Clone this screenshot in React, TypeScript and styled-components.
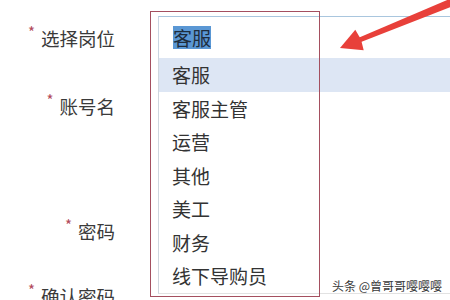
import React from 'react';
import styled, { createGlobalStyle } from 'styled-components';

const GlobalStyle = createGlobalStyle`
  html, body {
    margin: 0;
    padding: 0;
    background: #ffffff;
  }
  body {
    font-family: "Noto Sans CJK SC", "Noto Sans", sans-serif;
  }
`;

const Page = styled.div`
  position: relative;
  width: 450px;
  height: 300px;
  overflow: hidden;
  background: #ffffff;
`;

// form rows behind the open dropdown
const Form = styled.div`
  display: flex;
  flex-direction: column;
  padding-top: 16px;
`;

const FormRow = styled.div<{ $height: number; $after: number }>`
  display: flex;
  align-items: center;
  height: ${p => p.$height}px;
  margin-bottom: ${p => p.$after}px;
`;

const Label = styled.div`
  width: 115px;
  flex-shrink: 0;
  text-align: right;
  font-size: 18.5px;
  line-height: 24px;
  color: #3a3a3a;
  white-space: nowrap;
`;

const Star = styled.span`
  display: inline-block;
  margin-right: 6px;
  font-size: 15px;
  line-height: 1;
  color: #b24a5c;
  vertical-align: 8px;
`;

const SelectBox = styled.div`
  margin-left: 43px;
  flex: 1;
  align-self: stretch;
  display: flex;
  align-items: center;
  padding-left: 14px;
  border-top: 1px solid #a9c6de;
  border-left: 1px solid #c9d5e2;
  background: #ffffff;
`;

const Selected = styled.span`
  font-size: 19px;
  line-height: 23px;
  background: #5a97d4;
  color: #1e2d3d;
`;

const Dropdown = styled.ul`
  position: absolute;
  left: 158px;
  top: 58px;
  right: -4px;
  margin: 0;
  padding: 0;
  list-style: none;
  background: #ffffff;
  border-left: 1px solid #cfd6de;
  border-bottom: 1px solid #e2e2e2;
`;

const Option = styled.li<{ $active?: boolean }>`
  height: 33.5px;
  display: flex;
  align-items: center;
  padding-left: 13px;
  font-size: 19px;
  color: #333333;
  background: ${p => (p.$active ? '#dde6f4' : 'transparent')};
`;

const Annotation = styled.div`
  position: absolute;
  left: 150px;
  top: 11px;
  width: 168px;
  height: 284px;
  border: 1.5px solid #a44f5f;
  pointer-events: none;
`;

const Arrow = styled.svg`
  position: absolute;
  left: 0;
  top: 0;
  pointer-events: none;
`;

const Watermark = styled.div`
  position: absolute;
  right: 8px;
  top: 278px;
  font-size: 12px;
  line-height: 16px;
  color: #3a3a3a;
  white-space: nowrap;
`;

const options = ['客服', '客服主管', '运营', '其他', '美工', '财务', '线下导购员'];

export default function App() {
  return (
    <Page>
      <GlobalStyle />
      <Form>
        <FormRow $height={42} $after={28}>
          <Label><Star>*</Star>选择岗位</Label>
          <SelectBox>
            <Selected>客服</Selected>
          </SelectBox>
        </FormRow>
        <FormRow $height={38} $after={87}>
          <Label><Star>*</Star>账号名</Label>
        </FormRow>
        <FormRow $height={38} $after={27}>
          <Label><Star>*</Star>密码</Label>
        </FormRow>
        <FormRow $height={38} $after={0}>
          <Label><Star>*</Star>确认密码</Label>
        </FormRow>
      </Form>

      <Dropdown>
        {options.map((o, i) => (
          <Option key={o} $active={i === 0}>{o}</Option>
        ))}
      </Dropdown>

      <Annotation />

      <Arrow width="450" height="300" viewBox="0 0 450 300">
        <polygon
          points="360.4,42.3 456.5,4.7 453.5,-2.7 358.6,37.7"
          fill="#e8403a"
        />
        <polygon
          points="340,48 355.3,29.8 361,39.5 363.7,50.2"
          fill="#e8403a"
        />
      </Arrow>

      <Watermark>头条 @曾哥哥嘤嘤嘤</Watermark>
    </Page>
  );
}
